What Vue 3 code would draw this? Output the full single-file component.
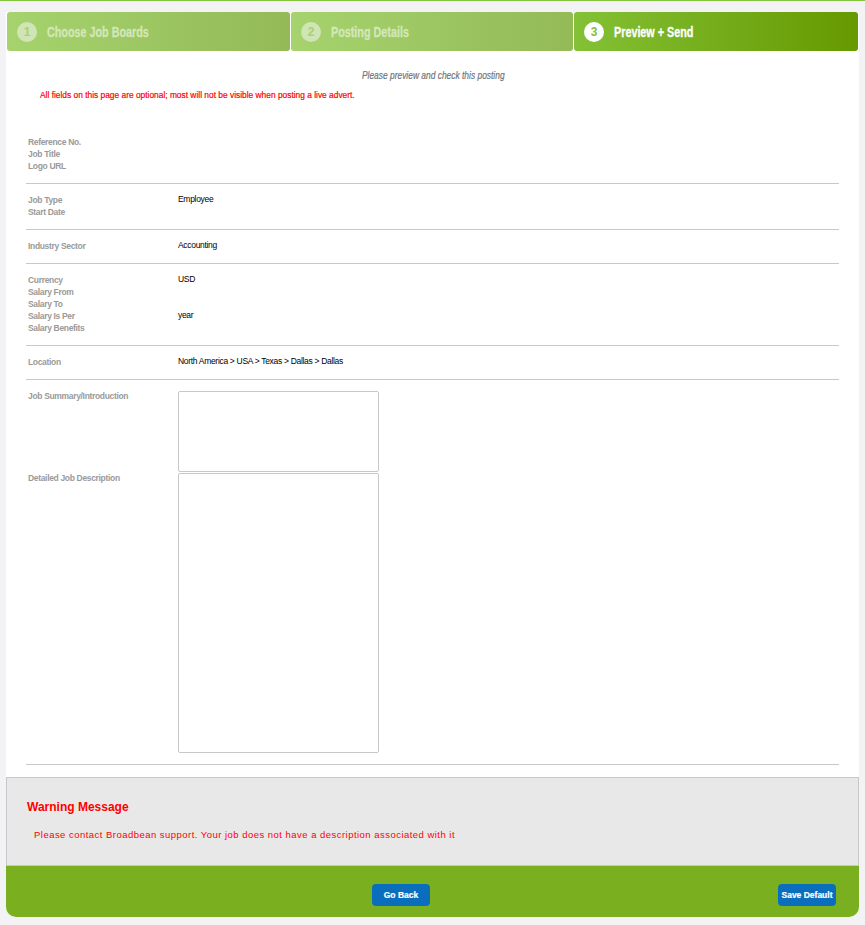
<script setup>
const steps = [
  { num: 1, title: 'Choose Job Boards' },
  { num: 2, title: 'Posting Details' },
  { num: 3, title: 'Preview + Send', active: true },
]

const sections = [
  [
    { label: 'Reference No.', value: '' },
    { label: 'Job Title', value: '' },
    { label: 'Logo URL', value: '' },
  ],
  [
    { label: 'Job Type', value: 'Employee' },
    { label: 'Start Date', value: '' },
  ],
  [{ label: 'Industry Sector', value: 'Accounting' }],
  [
    { label: 'Currency', value: 'USD' },
    { label: 'Salary From', value: '' },
    { label: 'Salary To', value: '' },
    { label: 'Salary Is Per', value: 'year' },
    { label: 'Salary Benefits', value: '' },
  ],
  [{ label: 'Location', value: 'North America > USA > Texas > Dallas > Dallas' }],
]
</script>

<template>
  <div class="page">
    <div class="panel">
      <div class="steps">
        <div v-for="step in steps" :key="step.num" class="step" :class="{ active: step.active }">
          <span class="step-num">{{ step.num }}</span>
          <span class="step-title">{{ step.title }}</span>
        </div>
      </div>

      <p class="intro"><span>Please preview and check this posting</span></p>
      <p class="notice">All fields on this page are optional; most will not be visible when posting a live advert.</p>

      <div class="details">
        <div v-for="(section, i) in sections" :key="i" class="section">
          <div v-for="row in section" :key="row.label" class="row">
            <span class="label">{{ row.label }}</span>
            <span class="value">{{ row.value }}</span>
          </div>
        </div>

        <div class="section">
          <div class="row">
            <span class="label">Job Summary/Introduction</span>
            <textarea class="box box-short" readonly></textarea>
          </div>
          <div class="row">
            <span class="label">Detailed Job Description</span>
            <textarea class="box box-tall" readonly></textarea>
          </div>
        </div>
      </div>

      <div class="warning">
        <h3>Warning Message</h3>
        <p>Please contact Broadbean support. Your job does not have a description associated with it</p>
      </div>

      <div class="footer">
        <button type="button">Go Back</button>
        <button type="button">Save Default</button>
      </div>
    </div>
  </div>
</template>

<style>
html,
body {
  margin: 0;
  background: #f3f3f5;
}
</style>

<style scoped>
.page {
  min-height: 924px;
  border-top: 1px solid #84c43c;
  padding: 11px 6px 0;
  box-sizing: border-box;
  font-family: "Liberation Sans", Arial, sans-serif;
}

.panel {
  background: #fff;
  border-radius: 0 0 10px 10px;
}

/* step tabs */
.steps {
  display: grid;
  grid-template-columns: 283px 282px 1fr;
  gap: 1px;
  padding: 0 1px;
}

.step {
  height: 39px;
  display: flex;
  align-items: center;
  padding-left: 10px;
  border-radius: 3px;
  background: linear-gradient(to right, #a6d36d, #93ba57);
  color: #d3e7bb;
}

.step.active {
  background: linear-gradient(to right, #84c136, #669900);
  color: #fff;
}

.step-num {
  width: 20px;
  height: 20px;
  border-radius: 50%;
  background: #cfe5b5;
  color: #a8d171;
  font-size: 12px;
  font-weight: bold;
  line-height: 20px;
  text-align: center;
}

.active .step-num {
  background: #fff;
  color: #84c136;
}

/* no narrow face installed, so the condensed headings are squeezed */
.step-title {
  margin-left: 10px;
  font-size: 14px;
  font-weight: bold;
  transform: scaleX(0.77);
  transform-origin: left center;
  white-space: nowrap;
  -webkit-text-stroke: 0.3px currentColor;
}

.intro {
  margin: 18px 0 0;
  padding-left: 2px;
  text-align: center;
  font-size: 11px;
  font-style: italic;
  line-height: 12px;
  color: #6f747c;
}

.intro span {
  display: inline-block;
  transform: scaleX(0.765);
  -webkit-text-stroke: 0.2px currentColor;
}

.notice {
  margin: 8px 0 0 34px;
  font-size: 8.4px;
  line-height: 12px;
  color: #f00;
  -webkit-text-stroke: 0.2px currentColor;
}

/* field sections */
.details {
  margin: 25px 20px 0;
}

.section {
  padding: 10px 0 11px;
  border-bottom: 1px solid #c8c8c8;
}

.row {
  display: flex;
  min-height: 12px;
}

.label {
  width: 152px;
  padding-left: 2px;
  flex-shrink: 0;
  box-sizing: border-box;
  font-size: 8.5px;
  font-weight: bold;
  letter-spacing: -0.33px;
  line-height: 12px;
  color: #9a9a9a;
}

.value {
  font-size: 8.5px;
  letter-spacing: -0.31px;
  line-height: 10px;
  color: #000;
}

.box {
  display: block;
  width: 201px;
  margin: 1px 0 0;
  padding: 0;
  box-sizing: border-box;
  border: 1px solid #c8c8c8;
  border-radius: 2px;
  background: #fff;
  resize: none;
  outline: none;
}

.box-short {
  height: 81px;
}

.box-tall {
  height: 280px;
}

/* warning */
.warning {
  margin-top: 12px;
  padding: 22px 20px 24px;
  background: #e8e8e8;
  border: 1px solid #c8c8c8;
}

.warning h3 {
  margin: 0;
  font-size: 12px;
  font-weight: bold;
  line-height: 14px;
  color: #f00;
}

.warning p {
  margin: 15px 0 0 7px;
  font-size: 9.5px;
  letter-spacing: 0.47px;
  line-height: 12px;
  color: #f00;
}

.footer {
  height: 51px;
  padding: 18px 23px 0 366px;
  box-sizing: border-box;
  display: flex;
  justify-content: space-between;
  align-items: flex-start;
  background: #7ab020;
  border-radius: 0 0 10px 10px;
}

.footer button {
  width: 58px;
  height: 22px;
  padding: 0;
  border: none;
  border-radius: 4px;
  background: #0a6ebd;
  color: #fff;
  font-family: "Liberation Sans", Arial, sans-serif;
  font-size: 8.5px;
  font-weight: bold;
  -webkit-text-stroke: 0.2px currentColor;
}
</style>
